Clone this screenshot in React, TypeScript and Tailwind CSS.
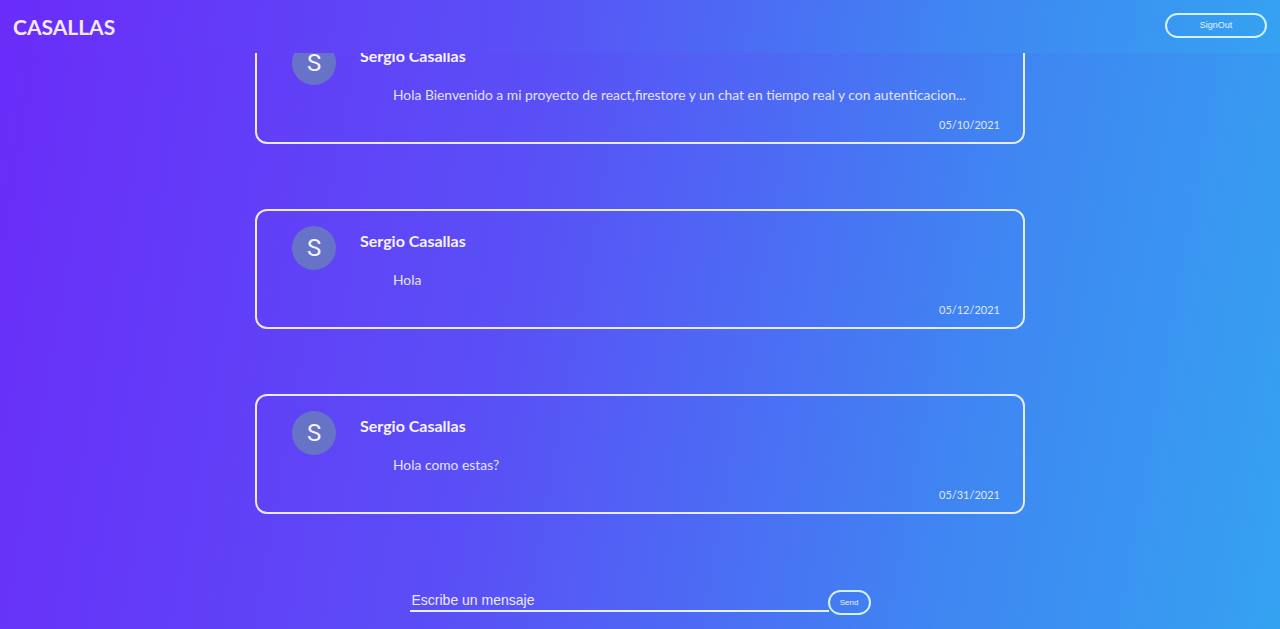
const messages = [
  {
    name: 'Sergio Casallas',
    text: 'Hola Bienvenido a mi proyecto de react,firestore y un chat en tiempo real y con autenticacion...',
    date: '05/10/2021'
  },
  { name: 'Sergio Casallas', text: 'Hola', date: '05/12/2021' },
  { name: 'Sergio Casallas', text: 'Hola como estas?', date: '05/31/2021' }
]

function MessageCard({ name, text, date, first }: { name: string; text: string; date: string; first?: boolean }) {
  return (
    <div
      className={`w-[770px] h-[120px] shrink-0 rounded-[12px] border-2 border-[#e8ebff] flex pl-[35px] pt-[15px] ${
        first ? '-mt-[29px]' : 'mt-[65px]'
      }`}
    >
      <div className="w-[44px] h-[44px] rounded-full bg-[#6773c6] flex items-center justify-center text-[#f4f4ff] text-[24px] font-['Roboto',sans-serif]">
        S
      </div>
      <div className="flex-1 ml-[24px] pr-[23px] flex flex-col">
        <div className="mt-[5px] text-[16px] leading-[20px] font-bold text-[#f6f2ff]">{name}</div>
        <div className="mt-[19px] ml-[33px] text-[13.85px] leading-[20px] whitespace-nowrap text-[#e4e2fa]">{text}</div>
        <div className="mt-[13px] text-right text-[11px] leading-[14px] text-[#dfe6ff]">{date}</div>
      </div>
    </div>
  )
}

export default function App() {
  return (
    <div className="h-[629px] w-full overflow-hidden flex flex-col bg-[linear-gradient(100deg,#6a2cf9_0%,#5a4ff6_40%,#3f86f2_75%,#35a2f1_100%)] font-['Lato',sans-serif]">
      {/* Header */}
      <header className="relative z-10 h-[53px] shrink-0 flex items-center justify-between pl-[13px] pr-[13px] bg-[linear-gradient(100deg,#6a2cf9_0%,#5a4ff6_40%,#3f86f2_75%,#35a2f1_100%)]">
        <h1 className="text-[21px] font-bold text-[#f5e8ff] mt-[1px]">CASALLAS</h1>
        <button className="w-[102px] h-[25px] -mt-[2px] rounded-full border-2 border-[#cff3ff] text-[9px] text-[#e3f3ff] font-['Liberation_Sans',sans-serif]">
          SignOut
        </button>
      </header>

      {/* Messages */}
      <main className="flex flex-col items-center">
        {messages.map((m, i) => (
          <MessageCard key={i} {...m} first={i === 0} />
        ))}

        {/* Input row */}
        <form className="mt-[76px] flex items-start" onSubmit={e => e.preventDefault()}>
          <input
            placeholder="Escribe un mensaje"
            className="w-[419px] h-[22px] bg-transparent border-b-2 border-[#e6f0ff] px-[2px] text-[14px] text-white placeholder:text-[#ece8ff] outline-none font-['Liberation_Sans',sans-serif]"
          />
          <button className="-ml-[1px] w-[43px] h-[25px] rounded-full border-2 border-[#cff3ff] text-[8px] text-[#e3f3ff] font-['Liberation_Sans',sans-serif]">
            Send
          </button>
        </form>
      </main>
    </div>
  )
}
